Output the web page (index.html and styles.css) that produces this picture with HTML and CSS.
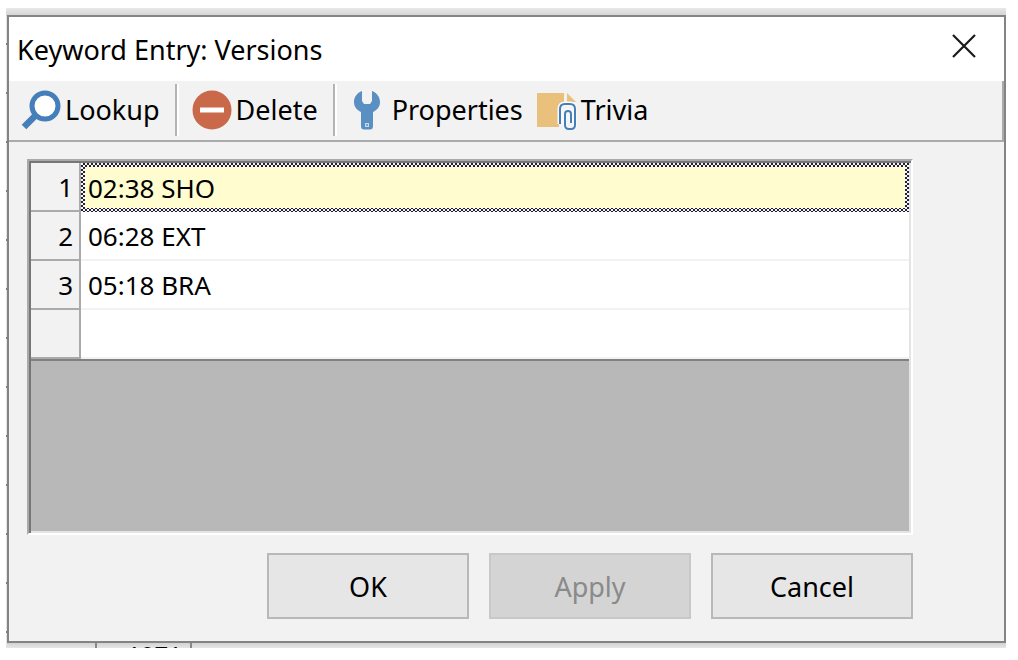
FILE: index.html
```
<!DOCTYPE html>
<html lang="en">
<head>
  <meta charset="UTF-8" />
  <meta name="viewport" content="width=device-width, initial-scale=1" />
  <title>Keyword Entry: Versions</title>
  <link rel="stylesheet" href="styles.css">
</head>
<body>
  <div class="backdrop">
    <div class="dialog" role="dialog" aria-labelledby="title">
      <div class="title-bar">
        <h1 id="title">Keyword Entry: Versions</h1>
        <button class="close" aria-label="Close">
          <svg width="26" height="26" viewBox="0 0 26 26"><path d="M2 2 24 24M24 2 2 24" stroke="#1a1a1a" stroke-width="2.2" fill="none"/></svg>
        </button>
      </div>

      <div class="toolbar">
        <button class="tool">
          <svg width="40" height="40" viewBox="0 0 40 40" fill="none" stroke="#457fb9">
            <circle cx="24" cy="16" r="13" fill="#fff" stroke-width="5"/>
            <path d="M14 26 3 37" stroke-width="6.5"/>
          </svg>
          Lookup
        </button>
        <span class="separator"></span>
        <button class="tool">
          <svg width="40" height="40" viewBox="0 0 40 40">
            <circle cx="20" cy="20" r="19.5" fill="#c9694a"/>
            <path d="M8 20H32" stroke="#fff" stroke-width="5"/>
          </svg>
          Delete
        </button>
        <span class="separator"></span>
        <button class="tool wide">
          <svg width="26" height="40" viewBox="0 0 26 40">
            <path fill="#5a8fc3" d="M8 1C3 3 0 7 0 12C0 17 3 20 7 22V36Q7 39.500 10 39.500H16Q19 39.500 19 36V22C23 20 26 17 26 12C26 7 23 3 18 1V11L16 14H10L8 11Z"/>
            <path d="M11 33H15V37H11Z" fill="#c5dbed"/>
            <circle cx="13" cy="35" r="1" fill="#5a8fc3"/>
          </svg>
          Properties
        </button>
        <button class="tool">
          <svg width="40" height="40" viewBox="0 0 40 40" fill="none">
            <path d="M0 3H27V12L22 18V37H0Z" fill="#e9c17d"/>
            <path d="M30 3 39 12H30Z" fill="#e9c17d"/>
            <path d="M23 34V19Q23 14 28 14H33Q38 14 38 19V35Q38 39 34 39H32Q28 39 28 35V24Q28 21 31 21Q34 21 34 24V33" stroke="#f8f8f8" stroke-width="5"/>
            <path d="M23 34V19Q23 14 28 14H33Q38 14 38 19V35Q38 39 34 39H32Q28 39 28 35V24Q28 21 31 21Q34 21 34 24V33" stroke="#457fb9" stroke-width="2"/>
          </svg>
          Trivia
        </button>
      </div>

      <div class="content">
        <div class="list">
          <table>
            <tbody>
              <tr class="selected"><th scope="row">1</th><td>02:38 SHO</td></tr>
              <tr><th scope="row">2</th><td>06:28 EXT</td></tr>
              <tr><th scope="row">3</th><td>05:18 BRA</td></tr>
              <tr><th scope="row"></th><td></td></tr>
            </tbody>
          </table>
        </div>
        <div class="actions">
          <button>OK</button>
          <button disabled>Apply</button>
          <button>Cancel</button>
        </div>
      </div>
    </div>
    <div class="sheet-row"><span>1971</span></div>
  </div>
</body>
</html>
```
FILE: styles.css
```
* {
  box-sizing: border-box;
}

body {
  margin: 0;
  padding: 8px 12px 12px 6px;
  min-height: 100vh;
  display: flex;
  background: #fff;
  color: #000;
  font-family: "Noto Sans", "Open Sans", sans-serif;
  font-size: 27px;
}

button {
  font: inherit;
  color: inherit;
}

svg {
  display: block;
  flex: none;
}

/* the sheet behind the dialog */
.backdrop {
  flex: 1;
  display: flex;
  flex-direction: column;
  padding: 7px 0 0 1px;
  background:
    linear-gradient(#e8e8e8, #d2d2d2) 0 0 / 100% 8px no-repeat,
    repeating-linear-gradient(#e4e4e4 0 35px, #777 35px 37px, #e4e4e4 37px 49px);
}

.dialog {
  flex: 1;
  display: flex;
  flex-direction: column;
  border: 2px solid #848484;
  background: #f2f2f2;
}

.title-bar {
  display: flex;
  align-items: center;
  justify-content: space-between;
  height: 64px;
  padding: 0 27px 0 8px;
  background: #fff;
}

.title-bar h1 {
  margin: 0;
  font-size: 27px;
  font-weight: normal;
}

.close {
  padding: 0 0 6px;
  border: none;
  background: none;
}

.toolbar {
  display: flex;
  align-items: center;
  height: 61px;
  padding: 0 12px 2px;
  border-right: 2px solid #aaa;
  border-bottom: 2px solid #aaa;
}

.tool {
  display: flex;
  align-items: center;
  gap: 4px;
  padding: 0;
  border: none;
  background: none;
}

.tool.wide {
  gap: 12px;
  margin: 0 14px 0 4px;
}

.separator {
  width: 4px;
  height: 52px;
  margin: 0 13px 0 15px;
  border-left: 2px solid #b4b4b4;
  border-right: 2px solid #fff;
}

.content {
  flex: 1;
  display: flex;
  flex-direction: column;
  padding: 17px 91px 22px 18px;
}

.list {
  flex: 1;
  border: 2px solid;
  border-color: #aaa #fff #fff #aaa;
  background: #b8b8b8;
  box-shadow: inset 2px 2px #777, inset -2px -2px #e4e4e4;
  padding: 2px;
}

table {
  width: 100%;
  border-collapse: separate;
  border-spacing: 0;
  border-bottom: 2px solid #808080;
  background: #fff;
  font-size: 26px;
}

th,
td {
  height: 49px;
  padding: 0;
  line-height: 34px;
}

th {
  width: 50px;
  padding-right: 6px;
  border-right: 2px solid #aaa;
  border-bottom: 2px solid #aaa;
  background: #f2f2f2;
  font-weight: normal;
  text-align: right;
}

td {
  padding-left: 7px;
  border-bottom: 2px solid #f2f2f2;
}

/* checkered focus frame */
.selected td {
  padding-left: 3px;
  border: 4px solid transparent;
  background:
    linear-gradient(#fffccf, #fffccf) padding-box,
    repeating-conic-gradient(#1c1c5c 0 25%, #fffccf 0 50%) 0 0 / 4px 4px border-box;
}

.actions {
  display: flex;
  justify-content: flex-end;
  gap: 20px;
  margin-top: 18px;
}

.actions button {
  width: 202px;
  height: 66px;
  padding: 0;
  border: 2px solid #b8b8b8;
  background: #e6e6e6;
}

.actions button:disabled {
  border-color: #c8c8c8;
  background: #d4d4d4;
  color: #8a8a8a;
}

.sheet-row {
  height: 5px;
  overflow: hidden;
  background: linear-gradient(#d2d2d2, #e6e6e6);
}

.sheet-row span {
  display: block;
  width: 97px;
  margin-left: 88px;
  padding-right: 8px;
  border: solid #888;
  border-width: 0 2px;
  font-size: 24px;
  line-height: 24px;
  text-align: right;
}
```
